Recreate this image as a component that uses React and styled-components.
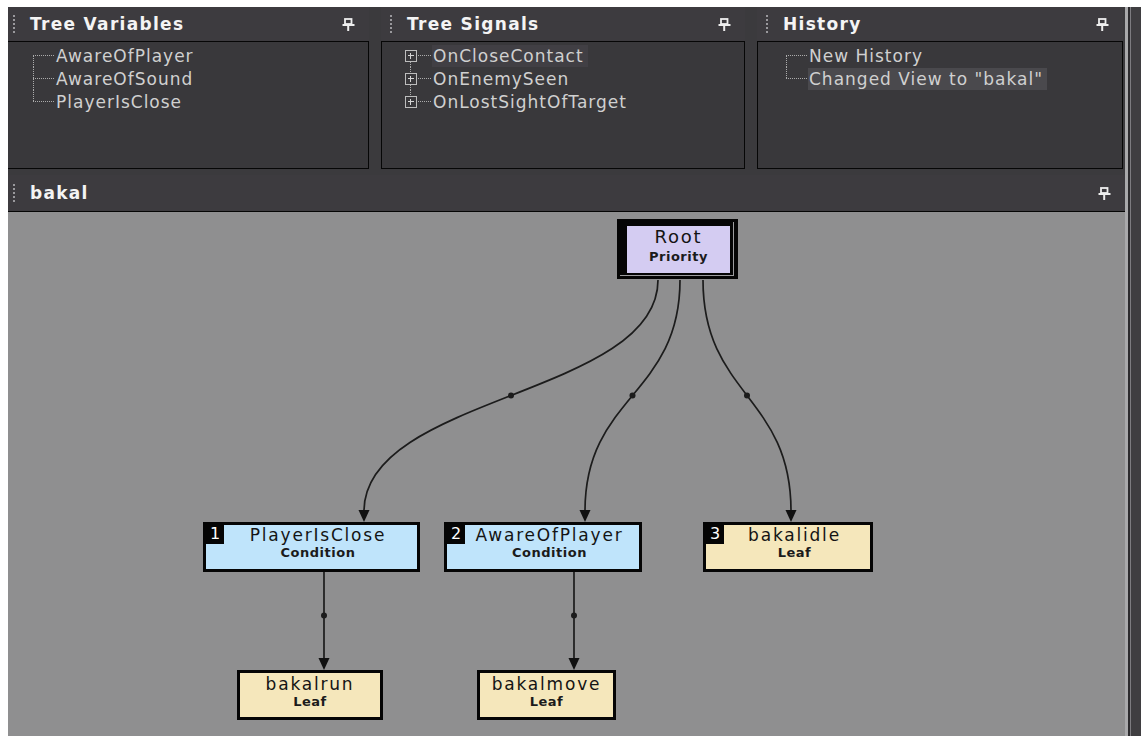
import React from "react";
import styled, { createGlobalStyle } from "styled-components";

const GlobalStyle = createGlobalStyle`
  html, body { margin: 0; padding: 0; background: #ffffff; overflow: hidden; }
  body { padding: 7px 0 0 8px; font-family: "DejaVu Sans", Verdana, sans-serif; }
`;

const Frame = styled.div`
  display: flex;
  width: 1133px;
  height: 729px;
  overflow: hidden;
  background: #3b3a3d;
`;

const Main = styled.div`
  width: 1117px;
  flex-shrink: 0;
`;

const Inner = styled.div`
  margin-left: -4px;
  width: 1121px;
  display: flex;
  flex-direction: column;
`;

const RightEdge = styled.div`
  width: 16px;
  flex-shrink: 0;
  background: linear-gradient(
    to right,
    #a9a9ab 0 3px,
    #2c2b2e 3px 5px,
    #7d7c80 5px 6px,
    #3f3e41 6px 100%
  );
`;

const TopRow = styled.div`
  display: grid;
  grid-template-columns: 365px 364px 366px;
  column-gap: 12px;
`;

const Panel = styled.section`
  display: flex;
  flex-direction: column;
`;

const PanelHeader = styled.header`
  height: ${(p) => p.$h}px;
  display: flex;
  align-items: center;
  padding: 0 14px 0 9px;
  background: #3d3b3f;
  border-bottom: ${(p) => (p.$line ? "1px solid #050505" : "none")};
`;

const Grip = styled.span`
  width: 2px;
  height: 19px;
  margin-right: 15px;
  background: repeating-linear-gradient(
    to bottom,
    #9a999d 0 2px,
    transparent 2px 4px
  );
`;

const Title = styled.h2`
  flex: 1;
  margin: 0;
  font-family: "DejaVu Sans", Verdana, sans-serif;
  font-weight: bold;
  font-size: 17px;
  letter-spacing: 1.3px;
  color: #f4f4f4;
`;

const PanelBody = styled.div`
  height: 128px;
  box-sizing: border-box;
  border: 1px solid #060606;
  background: #39383b;
  padding-top: 2px;
`;

const TreeRow = styled.div`
  height: 23px;
  display: flex;
  align-items: center;
  padding-left: 27px;
`;

const Connector = styled.span`
  position: relative;
  flex-shrink: 0;
  width: ${(p) => p.$w}px;
  height: 23px;

  &::before {
    content: "";
    position: absolute;
    left: ${(p) => p.$vx}px;
    top: ${(p) => (p.$first ? 11 : 0)}px;
    bottom: ${(p) => (p.$last ? 12 : 0)}px;
    border-left: 1px dotted #ababab;
  }
  &::after {
    content: "";
    position: absolute;
    left: ${(p) => p.$vx}px;
    right: 0;
    top: 11px;
    border-top: 1px dotted #ababab;
  }
`;

const Toggle = styled.span`
  position: absolute;
  z-index: 1;
  left: ${(p) => p.$vx - 5}px;
  top: 6px;
  width: 12px;
  height: 12px;
  box-sizing: border-box;
  border: 1px solid #bdbdbd;
  background: #39383b;

  &::before {
    content: "";
    position: absolute;
    left: 2px;
    right: 2px;
    top: 4px;
    border-top: 1px solid #d4d4d4;
  }
  &::after {
    content: "";
    position: absolute;
    top: 2px;
    bottom: 2px;
    left: 4px;
    border-left: 1px solid #d4d4d4;
  }
`;

const ItemLabel = styled.span`
  margin-left: 1px;
  padding: 0 4px 0 1px;
  line-height: 22px;
  font-family: "DejaVu Sans", Verdana, sans-serif;
  font-size: 17px;
  letter-spacing: 1px;
  color: #d0d0d0;
  white-space: nowrap;
  background: ${(p) =>
    p.$sel === "strong" ? "#4a494d" : p.$sel === "faint" ? "#413f44" : "transparent"};
`;

const DocHeaderWrap = styled.div`
  margin-top: 6px;
`;

const Canvas = styled.div`
  position: relative;
  height: 530px;
  background: #8f8f90;
  overflow: hidden;
`;

const Edges = styled.svg`
  position: absolute;
  left: 0;
  top: 0;
  width: 100%;
  height: 100%;
`;

const NodeBox = styled.div`
  position: absolute;
  left: ${(p) => p.$x}px;
  top: ${(p) => p.$y}px;
  width: ${(p) => p.$w}px;
  height: ${(p) => p.$h}px;
  box-sizing: border-box;
  border: 3px solid #050505;
  background: ${(p) => (p.$kind === "condition" ? "#bfe4fb" : "#f5e7bb")};
  display: flex;
  flex-direction: column;
  align-items: center;
  padding-top: ${(p) => (p.$kind === "leaf" && !p.$num ? 1 : 0)}px;
  padding-left: ${(p) => (p.$num ? 13 : 0)}px;
`;

const Badge = styled.span`
  position: absolute;
  left: 0;
  top: 0;
  width: 18px;
  height: 19px;
  background: #050505;
  color: #ffffff;
  font-family: "DejaVu Sans", Verdana, sans-serif;
  font-size: 16px;
  line-height: 18px;
  text-align: center;
`;

const NodeName = styled.span`
  font-family: "DejaVu Sans", Verdana, sans-serif;
  font-size: ${(p) => p.$size || 17}px;
  letter-spacing: 1.8px;
  line-height: 20px;
  color: #141414;
  white-space: nowrap;
`;

const NodeSub = styled.span`
  margin-top: ${(p) => p.$gap}px;
  font-family: "DejaVu Sans", Verdana, sans-serif;
  font-weight: bold;
  font-size: 13px;
  letter-spacing: 0.5px;
  line-height: 16px;
  color: #1b1b1b;
`;

const RootOuter = styled.div`
  position: absolute;
  left: ${(p) => p.$x}px;
  top: ${(p) => p.$y}px;
  width: ${(p) => p.$w}px;
  height: ${(p) => p.$h}px;
  box-sizing: border-box;
  background: #050505;
  padding: 3px 4px 3px 3px;
`;

const RootFrame = styled.div`
  height: 100%;
  box-sizing: border-box;
  border-right: 1px solid #9c9c9e;
  border-bottom: 1px solid #9c9c9e;
  padding: 4px 3px 2px 7px;
`;

const RootFill = styled.div`
  height: 100%;
  background: #d4ccf2;
  display: flex;
  flex-direction: column;
  align-items: center;
  padding-top: 1px;
  box-sizing: border-box;
`;

function Pin() {
  return (
    <svg width="13" height="13" viewBox="0 0 13 13">
      <rect x="3" y="1" width="6.5" height="5" fill="none" stroke="#eeeeee" strokeWidth="1.8" />
      <line x1="0.5" y1="7" x2="12.5" y2="7" stroke="#eeeeee" strokeWidth="2" />
      <line x1="6.2" y1="7" x2="6.2" y2="13" stroke="#eeeeee" strokeWidth="2" />
    </svg>
  );
}

function TreeList({ items, toggles }) {
  return items.map((it, i) => (
    <TreeRow key={it.label}>
      <Connector $w={22} $vx={1} $first={i === 0} $last={i === items.length - 1}>
        {toggles && <Toggle $vx={1} />}
      </Connector>
      <ItemLabel $sel={it.sel}>{it.label}</ItemLabel>
    </TreeRow>
  ));
}

const panels = [
  {
    title: "Tree Variables",
    items: [{ label: "AwareOfPlayer" }, { label: "AwareOfSound" }, { label: "PlayerIsClose" }],
  },
  {
    title: "Tree Signals",
    toggles: true,
    items: [
      { label: "OnCloseContact", sel: "faint" },
      { label: "OnEnemySeen" },
      { label: "OnLostSightOfTarget" },
    ],
  },
  {
    title: "History",
    items: [{ label: "New History" }, { label: 'Changed View to "bakal"', sel: "strong" }],
  },
];

const nodes = [
  { kind: "condition", num: 1, x: 199, y: 310, w: 217, h: 50, name: "PlayerIsClose", sub: "Condition" },
  { kind: "condition", num: 2, x: 440, y: 310, w: 198, h: 50, name: "AwareOfPlayer", sub: "Condition" },
  { kind: "leaf", num: 3, x: 699, y: 310, w: 170, h: 50, name: "bakalidle", sub: "Leaf" },
  { kind: "leaf", x: 233, y: 458, w: 146, h: 50, name: "bakalrun", sub: "Leaf" },
  { kind: "leaf", x: 473, y: 458, w: 139, h: 50, name: "bakalmove", sub: "Leaf" },
];

const edges = [
  [654, 68, 360, 310],
  [676, 68, 581, 310],
  [699, 68, 787, 310],
  [320, 360, 320, 458],
  [570, 360, 570, 458],
];

function Edge({ e }) {
  const [x1, y1, x2, y2] = e;
  const ye = y2 - 11;
  const ym = (y1 + ye) / 2;
  const d = `M${x1},${y1} C${x1},${ym} ${x2},${ym} ${x2},${ye}`;
  const mx = (x1 + x2) / 2;
  return (
    <g>
      <path d={d} fill="none" stroke="#1c1c1c" strokeWidth="1.7" />
      <circle cx={mx} cy={ym} r="3" fill="#1c1c1c" />
      <polygon points={`${x2 - 5.5},${ye - 1} ${x2 + 5.5},${ye - 1} ${x2},${y2}`} fill="#111" />
    </g>
  );
}

export default function App() {
  return (
    <>
      <GlobalStyle />
      <Frame>
        <Main>
          <Inner>
            <TopRow>
              {panels.map((p) => (
                <Panel key={p.title}>
                  <PanelHeader $h={34}>
                    <Grip />
                    <Title>{p.title}</Title>
                    <Pin />
                  </PanelHeader>
                  <PanelBody>
                    <TreeList items={p.items} toggles={p.toggles} />
                  </PanelBody>
                </Panel>
              ))}
            </TopRow>
            <DocHeaderWrap>
              <PanelHeader $h={36} $line>
                <Grip />
                <Title>bakal</Title>
                <Pin />
              </PanelHeader>
              <Canvas>
                <Edges viewBox="0 0 1121 530" preserveAspectRatio="xMinYMin meet">
                  {edges.map((e, i) => (
                    <Edge key={i} e={e} />
                  ))}
                </Edges>
                <RootOuter $x={613} $y={7} $w={121} $h={60}>
                  <RootFrame>
                    <RootFill>
                      <NodeName $size={18}>Root</NodeName>
                      <NodeSub $gap={2}>Priority</NodeSub>
                    </RootFill>
                  </RootFrame>
                </RootOuter>
                {nodes.map((n) => (
                  <NodeBox key={n.name} $kind={n.kind} $num={n.num} $x={n.x} $y={n.y} $w={n.w} $h={n.h}>
                    {n.num && <Badge>{n.num}</Badge>}
                    <NodeName>{n.name}</NodeName>
                    <NodeSub $gap={0}>{n.sub}</NodeSub>
                  </NodeBox>
                ))}
              </Canvas>
            </DocHeaderWrap>
          </Inner>
        </Main>
        <RightEdge />
      </Frame>
    </>
  );
}
